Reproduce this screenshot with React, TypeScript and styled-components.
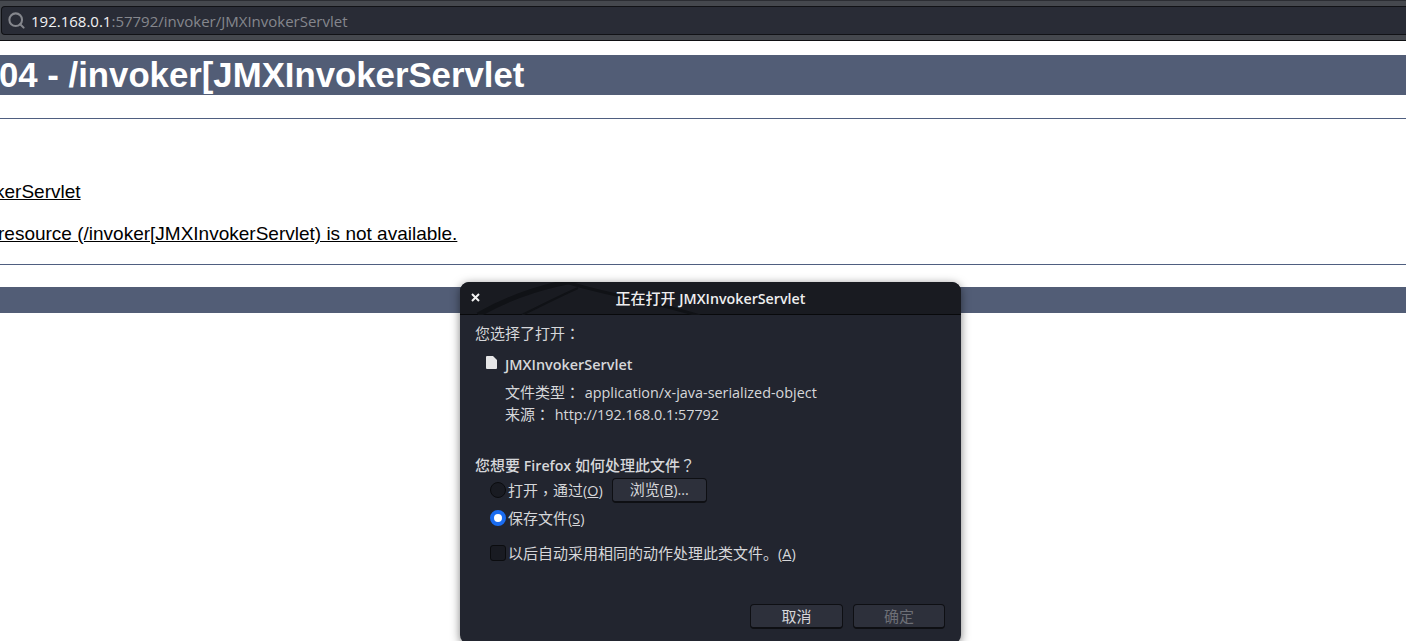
import React from 'react';
import styled, { createGlobalStyle } from 'styled-components';
import { Search } from 'lucide-react';

const GlobalStyle = createGlobalStyle`
  html, body {
    margin: 0;
    padding: 0;
    height: 100%;
    background: #fff;
    overflow: hidden;
  }
`;

const UI_FONT = `"Open Sans", "Noto Sans", "Noto Sans CJK SC", sans-serif`;

const Page = styled.div`
  position: relative;
  width: 1406px;
  height: 641px;
  overflow: hidden;
  font-family: "Liberation Sans", Arial, sans-serif;
`;

const Toolbar = styled.div`
  height: 41px;
  box-sizing: border-box;
  background: #45484e;
  border-top: 1px solid #2b2d33;
  border-bottom: 1px solid #0f1013;
  padding: 5px 0 5px 1px;
`;

const UrlBar = styled.div`
  height: 29px;
  box-sizing: border-box;
  display: flex;
  align-items: center;
  gap: 5px;
  padding-left: 5px;
  background: #292c36;
  border: 1px solid #111216;
  border-right: none;
  border-radius: 4px 0 0 4px;
  font-family: ${UI_FONT};
  font-size: 15px;
  color: #85878d;
`;

const Host = styled.span`
  color: #f2f2f3;
`;

const Content = styled.main`
  padding-top: 14px;
`;

const Heading = styled.h1`
  margin: 0;
  height: 40px;
  line-height: 40px;
  background: #525d76;
  color: #fff;
  font-size: 34.75px;
  font-weight: 700;
  text-indent: -1px;
  white-space: nowrap;
`;

const Rule = styled.hr<{ $top: number }>`
  margin: ${p => p.$top}px 0 0;
  height: 1px;
  border: none;
  background: #4f5e80;
`;

const Message = styled.p<{ $top: number; $indent: number }>`
  margin: ${p => p.$top}px 0 0;
  line-height: 22px;
  font-size: 19px;
  color: #000;
  text-decoration: underline;
  text-indent: ${p => p.$indent}px;
  white-space: nowrap;
`;

const Footer = styled.div`
  margin-top: 22px;
  height: 26px;
  background: #525d76;
`;

const Dialog = styled.section`
  position: absolute;
  left: 460px;
  top: 282px;
  width: 501px;
  height: 362px;
  display: flex;
  flex-direction: column;
  background: #22252f;
  border-radius: 9px;
  box-shadow: 0 2px 10px rgba(0, 0, 0, 0.5);
  color: #d6d7da;
  font-family: ${UI_FONT};
  font-size: 14.4px;
  overflow: hidden;
`;

const Cjk = styled.span<{ $strong?: boolean }>`
  font-size: 15px;
  font-weight: ${p => (p.$strong ? 500 : 400)};
`;

const Punct = styled.span`
  display: inline-block;
  width: 15px;
  margin-right: 1px;
  line-height: 1;
  text-align: center;
  font-family: "Noto Sans CJK TC", sans-serif;
  font-size: 15px;
  font-weight: 400;
`;

// comma sits low in its cell in the original font
const LowComma = styled(Punct)`
  margin-right: 0;
  transform: translateY(3px);
`;

const TitleBar = styled.header`
  position: relative;
  flex: none;
  height: 33px;
  box-sizing: border-box;
  display: flex;
  align-items: center;
  justify-content: center;
  padding-bottom: 2px;
  background: #191b21;
  border-bottom: 1px solid #08090b;
  font-size: 14.25px;
  font-weight: 600;
  color: #eeeeef;
`;

const TitleArt = styled.svg`
  position: absolute;
  inset: 0;
`;

const TitleText = styled.span`
  position: relative;
`;

const CloseButton = styled.svg`
  position: absolute;
  left: 11px;
  top: 11px;
`;

const Body = styled.div`
  flex: 1;
  display: flex;
  flex-direction: column;
  padding: 7px 16px 0 15px;
`;

const Line = styled.div`
  height: 22px;
  line-height: 22px;
  white-space: nowrap;
`;

const FileRow = styled.div`
  display: flex;
  align-items: center;
  gap: 8px;
  height: 22px;
  margin: 9px 0 6px 11px;
  font-weight: 600;
`;

const FileIcon = styled.svg`
  margin-top: -4px;
`;

const Details = styled.div`
  padding-left: 30px;
`;

const Question = styled(Line)`
  margin-top: 29px;
`;

const Product = styled.span`
  font-size: 14.2px;
  font-weight: 600;
`;

const Options = styled.div`
  display: flex;
  flex-direction: column;
  padding-left: 15px;
`;

const OptionRow = styled.div<{ $top: number }>`
  display: flex;
  align-items: center;
  gap: 2px;
  margin-top: ${p => p.$top}px;
  height: 24px;
  line-height: 24px;
  white-space: nowrap;
`;

const Radio = styled.span<{ $on?: boolean }>`
  box-sizing: border-box;
  width: 16px;
  height: 16px;
  border-radius: 50%;
  background: ${p => (p.$on ? '#fff' : '#191b22')};
  border: ${p => (p.$on ? '4.5px solid #1a6cf0' : '1px solid #0b0c0f')};
`;

const CheckBox = styled.span`
  box-sizing: border-box;
  width: 16px;
  height: 16px;
  border-radius: 3px;
  background: #191b22;
  border: 1px solid #0b0c0f;
`;

const Button = styled.button<{ $disabled?: boolean; $width: number }>`
  box-sizing: border-box;
  width: ${p => p.$width}px;
  height: 25px;
  padding: 0;
  background: #2d303b;
  border: 1px solid #0e0f13;
  border-bottom-width: 2px;
  border-radius: 4px;
  color: ${p => (p.$disabled ? '#6d6f76' : '#d6d7da')};
  font-family: inherit;
  font-size: 14.4px;
  line-height: 21px;
`;

const BrowseButton = styled(Button)`
  margin-left: 7px;
`;

const Actions = styled.div`
  display: flex;
  justify-content: flex-end;
  gap: 10px;
  margin-top: 39px;
`;

const App = () => (
  <Page>
    <GlobalStyle />
    <Toolbar>
      <UrlBar>
        <Search size={19} color="#85878d" strokeWidth={2.6} />
        <span>
          <Host>192.168.0.1</Host>:57792/invoker/JMXInvokerServlet
        </span>
      </UrlBar>
    </Toolbar>
    <Content>
      <Heading>04 - /invoker[JMXInvokerServlet</Heading>
      <Rule $top={23} />
      <Message $top={62} $indent={-5}>kerServlet</Message>
      <Message $top={20} $indent={-2}>resource (/invoker[JMXInvokerServlet) is not available.</Message>
      <Rule $top={19} />
      <Footer />
    </Content>
    <Dialog>
      <TitleBar>
        <TitleArt width="501" height="33" viewBox="0 0 501 33" fill="none" stroke="#101216">
          <path d="M18 33 C55 12 90 2 130 -4" strokeWidth="5" />
          <path d="M100 -2 C140 12 190 18 240 34" strokeWidth="3" />
          <path d="M62 33 C80 24 100 14 118 6" strokeWidth="2" />
        </TitleArt>
        <CloseButton width="9" height="9" viewBox="0 0 9 9" stroke="#f2f2f2" strokeWidth="2">
          <path d="M1 1 L8 8 M8 1 L1 8" />
        </CloseButton>
        <TitleText>
          <Cjk $strong>正在打开</Cjk> JMXInvokerServlet
        </TitleText>
      </TitleBar>
      <Body>
        <Line>
          <Cjk>您选择了打开</Cjk>
          <Punct>：</Punct>
        </Line>
        <FileRow>
          <FileIcon width="11" height="13" viewBox="0 0 11 13" fill="#e6e6e7">
            <path d="M1 0 H7 L11 4 V12 Q11 13 10 13 H1 Q0 13 0 12 V1 Q0 0 1 0 Z" />
          </FileIcon>
          JMXInvokerServlet
        </FileRow>
        <Details>
          <Line>
            <Cjk>文件类型</Cjk>
            <Punct>：</Punct> application/x-java-serialized-object
          </Line>
          <Line>
            <Cjk>来源</Cjk>
            <Punct>：</Punct> http://192.168.0.1:57792
          </Line>
        </Details>
        <Question>
          <Cjk $strong>您想要</Cjk> <Product>Firefox</Product> <Cjk $strong>如何处理此文件</Cjk>
          <Punct>？</Punct>
        </Question>
        <Options>
          <OptionRow $top={2}>
            <Radio />
            <span>
              <Cjk>打开</Cjk>
              <LowComma>，</LowComma>
              <Cjk>通过</Cjk>(<u>O</u>)
            </span>
            <BrowseButton $width={95}>
              <Cjk>浏览</Cjk>(<u>B</u>)...
            </BrowseButton>
          </OptionRow>
          <OptionRow $top={4}>
            <Radio $on />
            <span>
              <Cjk>保存文件</Cjk>(<u>S</u>)
            </span>
          </OptionRow>
          <OptionRow $top={11}>
            <CheckBox />
            <span>
              <Cjk>以后自动采用相同的动作处理此类文件。</Cjk>(<u>A</u>)
            </span>
          </OptionRow>
        </Options>
        <Actions>
          <Button $width={93}>
            <Cjk>取消</Cjk>
          </Button>
          <Button $width={92} $disabled>
            <Cjk>确定</Cjk>
          </Button>
        </Actions>
      </Body>
    </Dialog>
  </Page>
);

export default App;
